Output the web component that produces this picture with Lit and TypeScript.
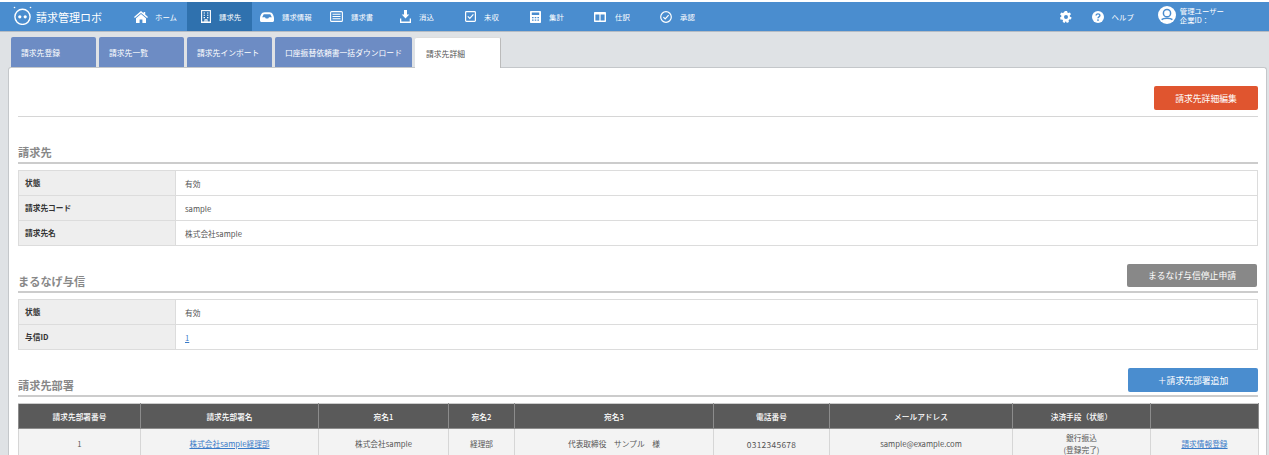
import { LitElement, html, css, svg } from "lit";
import { customElement } from "lit/decorators.js";

const icons: Record<string, unknown> = {
  home: svg`<svg width="14" height="12" viewBox="0 0 14 12" fill="#fff"><path d="M7 0 L9.6 2.2 V1 H11.2 V3.6 L14 6 L13.1 7 L7 1.9 L.9 7 L0 6Z"/><path d="M7 3 L12 7.2 V12 H8.4 V8.4 H5.6 V12 H2 V7.2Z"/></svg>`,
  building: svg`<svg width="10" height="13" viewBox="0 0 10 13" fill="none" stroke="#fff"><rect x=".6" y=".6" width="8.8" height="11.4" stroke-width="1.1"/><path d="M0 12.5H10" stroke-width="1"/><path d="M2.6 3h1.4M6 3h1.4M2.6 5.3h1.4M6 5.3h1.4M2.6 7.6h1.4M6 7.6h1.4M4 12V9.8h2V12" stroke-width="1.1"/></svg>`,
  tray: svg`<svg width="14" height="10" viewBox="0 0 14 10" fill="#fff"><path d="M3 .5C4.5 0 9.5 0 11 .5 12.5 1.2 14 4 14 6V8.5C14 9.3 13.3 10 12.5 10H1.5C.7 10 0 9.3 0 8.5V6C0 4 1.5 1.2 3 .5ZM3.7 2.2 2.2 5.2H5L5.8 6.4H8.2L9 5.2H11.8L10.3 2.2Z" fill-rule="evenodd"/></svg>`,
  list: svg`<svg width="13" height="11" viewBox="0 0 13 11" fill="none" stroke="#fff" stroke-width="1.1"><rect x=".6" y=".6" width="11.8" height="9.8" rx="1"/><path d="M2.5 3.2H10.5M2.5 5.5H10.5M2.5 7.8H10.5"/></svg>`,
  download: svg`<svg width="11" height="13" viewBox="0 0 11 13" fill="#fff"><path d="M4 0H7V4.4H9.3L5.5 8.4 1.7 4.4H4Z"/><path d="M0 8.4H1.3V11.4H9.7V8.4H11V13H0Z"/></svg>`,
  check: svg`<svg width="11" height="11" viewBox="0 0 11 11" fill="none" stroke="#fff"><rect x=".6" y=".6" width="9.8" height="9.8" rx=".8" stroke-width="1.2"/><path d="M2.8 5.4 4.8 7.4 8.4 3.4" stroke-width="1.2"/></svg>`,
  calc: svg`<svg width="11" height="12" viewBox="0 0 11 12" fill="#fff"><path fill-rule="evenodd" d="M1 0H10C10.6 0 11 .4 11 1V11C11 11.6 10.6 12 10 12H1C.4 12 0 11.6 0 11V1C0 .4 .4 0 1 0ZM1.8 1.6V4H9.2V1.6ZM2 6V7.2H3.6V6ZM4.7 6V7.2H6.3V6ZM7.4 6V7.2H9V6ZM2 8.6V9.8H3.6V8.6ZM4.7 8.6V9.8H6.3V8.6ZM7.4 8.6V9.8H9V8.6Z"/></svg>`,
  columns: svg`<svg width="12" height="10" viewBox="0 0 12 10" fill="#fff"><path fill-rule="evenodd" d="M1 0H11C11.6 0 12 .4 12 1V9C12 9.6 11.6 10 11 10H1C.4 10 0 9.6 0 9V1C0 .4 .4 0 1 0ZM1.4 2.6V8.6H5.4V2.6ZM6.6 2.6V8.6H10.6V2.6Z"/></svg>`,
  circleCheck: svg`<svg width="12" height="12" viewBox="0 0 12 12" fill="none" stroke="#fff" stroke-width="1.2"><circle cx="6" cy="6" r="5.3"/><path d="M3.4 6.2 5.2 8 8.6 4.2"/></svg>`,
};

const navItems = [
  { icon: "home", label: "ホーム", w: 67, pad: 14, gap: 7 },
  { icon: "building", label: "請求先", w: 65, pad: 14, gap: 8, active: true },
  { icon: "tray", label: "請求情報", w: 69, pad: 8, gap: 8 },
  { icon: "list", label: "請求書", w: 65, pad: 9, gap: 8 },
  { icon: "download", label: "消込", w: 65, pad: 14, gap: 8 },
  { icon: "check", label: "未収", w: 65, pad: 14, gap: 8 },
  { icon: "calc", label: "集計", w: 65, pad: 14, gap: 8 },
  { icon: "columns", label: "仕訳", w: 65, pad: 13, gap: 9 },
  { icon: "circleCheck", label: "承認", w: 65, pad: 14, gap: 8 },
];

const tabs = [
  { label: "請求先登録", w: 85 },
  { label: "請求先一覧", w: 85 },
  { label: "請求先インポート", w: 85 },
  { label: "口座振替依頼書一括ダウンロード", w: 137 },
  { label: "請求先詳細", w: 86, active: true },
];

const deptCols = [
  { h: "請求先部署番号", w: 122, v: "1" },
  { h: "請求先部署名", w: 178, v: "株式会社sample経理部", link: true },
  { h: "宛名1", w: 130, v: "株式会社sample" },
  { h: "宛名2", w: 66, v: "経理部" },
  { h: "宛名3", w: 199, v: "代表取締役　サンプル　様" },
  { h: "電話番号", w: 116, v: "0312345678", num: true },
  { h: "メールアドレス", w: 183, v: "sample@example.com" },
  { h: "決済手段（状態）", w: 138, v: "銀行振込\n(登録完了)" },
  { h: "", w: 108, v: "請求情報登録", link: true },
];

@customElement("app-root")
export class AppRoot extends LitElement {
  static styles = css`
    :host {
      display: block;
      height: 455px;
      overflow: hidden;
      background: #dfe2e5;
      font-family: "Noto Sans CJK JP", "Liberation Sans", sans-serif;
      color: #555;
    }
    .topgap { height: 2px; background: #fff; }
    header {
      height: 29px;
      background: #4a8dcf;
      border-bottom: 1px solid #b5bcc4;
      display: flex;
      align-items: stretch;
      color: #fff;
    }
    .logo {
      width: 120px;
      flex: none;
      display: flex;
      align-items: center;
      padding-left: 12px;
      gap: 3px;
      box-sizing: border-box;
      font-size: 11px;
      white-space: nowrap;
    }
    .logo svg { margin-top: -3px; }
    .nav-item {
      display: flex;
      align-items: center;
      box-sizing: border-box;
      flex: none;
      font-size: 7.4px;
      white-space: nowrap;
    }
    .nav-item.active { background: #2f71ae; }
    .nav-item svg { display: block; flex: none; }
    .right {
      margin-left: auto;
      display: flex;
      align-items: center;
      font-size: 7.4px;
      padding-right: 45px;
    }
    .gear { margin-right: 20px; }
    .help { display: flex; align-items: center; gap: 8px; margin-right: 24px; }
    .user { display: flex; align-items: center; gap: 4px; line-height: 9px; margin-top: -3px; }
    .tabs {
      display: flex;
      gap: 3px;
      padding: 5px 0 0 11px;
      height: 30px;
    }
    .tab {
      box-sizing: border-box;
      height: 30px;
      background: #6d8cc4;
      color: #fff;
      font-size: 7.8px;
      padding-left: 10px;
      display: flex;
      align-items: center;
      border-radius: 2px 2px 0 0;
      white-space: nowrap;
    }
    .tab.active {
      background: #fff;
      color: #555;
      height: 31px;
      padding-left: 11px;
      position: relative;
      z-index: 1;
      border-right: 1px solid #bbb;
      border-top: 1px solid #ddd;
    }
    .card {
      margin: 0 2px 0 8px;
      background: #fff;
      border: 1px solid #c4c7ca;
      border-bottom: 0;
      border-radius: 3px 3px 0 0;
      padding: 18px 8px 0 9px;
      height: 400px;
      box-sizing: border-box;
    }
    .toolbar {
      display: flex;
      justify-content: flex-end;
      padding-bottom: 6px;
      border-bottom: 1px solid #d6d6d6;
    }
    .btn {
      box-sizing: border-box;
      height: 24px;
      display: flex;
      align-items: center;
      justify-content: center;
      color: #fff;
      font-size: 8.8px;
      border-radius: 2px;
      white-space: nowrap;
    }
    .btn.red { width: 104px; background: #e0552f; }
    .btn.gray { width: 130px; height: 23px; background: #888; margin-right: 1px; margin-bottom: 4px; }
    .btn.blue { width: 130px; background: #4a8dcf; margin-bottom: 3px; }
    .sec-head {
      height: 47px;
      box-sizing: border-box;
      border-bottom: 2px solid #ccc;
      display: flex;
      justify-content: space-between;
      align-items: flex-end;
      margin-bottom: 6px;
    }
    .sec-title {
      font-size: 11.2px;
      color: #888;
      font-weight: 700;
      line-height: 16px;
      padding-bottom: 2px;
    }
    table {
      border-collapse: collapse;
      table-layout: fixed;
      width: 1240px;
      font-size: 7.7px;
    }
    .info th, .info td {
      border: 1px solid #dcdcdc;
      height: 25px;
      padding: 0;
      box-sizing: border-box;
    }
    .info th {
      width: 157px;
      background: #eee;
      color: #333;
      text-align: left;
      padding-left: 6px;
      padding-bottom: 2px;
      font-weight: 700;
    }
    .info td { padding-left: 9px; color: #555; }
    a { color: #3a7bc8; text-decoration: underline; }
    .dept th {
      background: #5a5a5a;
      color: #fff;
      height: 24px;
      padding: 0;
      font-weight: 500;
      border: 1px solid #8c8c8c;
      border-top-color: #ccc;
      text-align: center;
    }
    .dept td {
      background: #f3f3f3;
      border: 1px solid #d6d6d6;
      height: 30px;
      padding: 0;
      text-align: center;
      line-height: 12px;
      white-space: pre-line;
      color: #555;
    }
    .dept td.num { font-size: 8.4px; letter-spacing: .3px; }
  `;

  private infoTable(rows: [string, unknown][]) {
    return html`<table class="info">
      ${rows.map(([k, v]) => html`<tr><th>${k}</th><td>${v}</td></tr>`)}
    </table>`;
  }

  render() {
    return html`
      <div class="topgap"></div>
      <header>
        <div class="logo">
          <svg width="21" height="19" viewBox="0 0 21 19" fill="none">
            <circle cx="10.5" cy="10.8" r="7.6" stroke="#fff" stroke-width="1.4"/>
            <circle cx="7.8" cy="10.8" r="1.6" fill="#fff"/>
            <circle cx="13.2" cy="10.8" r="1.6" fill="#fff"/>
            <circle cx="2.5" cy="1.5" r=".8" fill="#fff"/>
            <circle cx="18.5" cy="1.5" r=".8" fill="#fff"/>
          </svg>
          <span>請求管理ロボ</span>
        </div>
        ${navItems.map(
          (n) => html`<div
            class="nav-item ${n.active ? "active" : ""}"
            style="width:${n.w}px;padding-left:${n.pad}px;gap:${n.gap}px"
          >
            ${icons[n.icon]}<span>${n.label}</span>
          </div>`
        )}
        <div class="right">
          <svg class="gear" width="12" height="12" viewBox="0 0 12 12" fill="#fff">
            <path fill-rule="evenodd" d="M4.9 0H7.1L7.4 1.6 8.4 2.1 9.9 1.4 11 3.3 9.8 4.3V5.5L11.6 6.4 10.9 8.6 9.6 8.2 8.6 9.3 8.9 11 6.9 12 6 10.6H5.4L4.6 12 2.7 11 3 9.3 2 8.4 .6 8.8 0 6.6 1.3 5.7V4.5L.1 3.4 1.2 1.4 2.8 2 3.8 1.5ZM6 4A2 2 0 1 0 6 8 2 2 0 1 0 6 4Z"/>
          </svg>
          <div class="help">
            <svg width="12" height="12" viewBox="0 0 12 12">
              <circle cx="6" cy="6" r="6" fill="#fff"/>
              <path d="M4.1 4.6C4.1 2.3 7.9 2.3 7.9 4.5 7.9 5.9 6 5.8 6 7.2" fill="none" stroke="#4a8dcf" stroke-width="1.4"/>
              <circle cx="6" cy="9.1" r=".9" fill="#4a8dcf"/>
            </svg>
            <span>ヘルプ</span>
          </div>
          <div class="user">
            <svg width="18" height="18" viewBox="0 0 18 18">
              <circle cx="9" cy="9" r="9" fill="#fff"/>
              <circle cx="9" cy="7.2" r="3.6" fill="none" stroke="#4a8dcf" stroke-width="1.5"/>
              <path d="M3.6 13.6C5.5 11.8 12.5 11.8 14.4 13.6" fill="none" stroke="#4a8dcf" stroke-width="1.5"/>
            </svg>
            <div>管理ユーザー<br />企業ID：</div>
          </div>
        </div>
      </header>
      <div class="tabs">
        ${tabs.map(
          (t) => html`<div class="tab ${t.active ? "active" : ""}" style="width:${t.w}px">${t.label}</div>`
        )}
      </div>
      <div class="card">
        <div class="toolbar"><div class="btn red">請求先詳細編集</div></div>
        <div class="sec-head"><div class="sec-title">請求先</div></div>
        ${this.infoTable([
          ["状態", "有効"],
          ["請求先コード", "sample"],
          ["請求先名", "株式会社sample"],
        ])}
        <div class="sec-head">
          <div class="sec-title">まるなげ与信</div>
          <div class="btn gray">まるなげ与信停止申請</div>
        </div>
        ${this.infoTable([
          ["状態", "有効"],
          ["与信ID", html`<a>1</a>`],
        ])}
        <div class="sec-head">
          <div class="sec-title">請求先部署</div>
          <div class="btn blue">＋請求先部署追加</div>
        </div>
        <table class="dept">
          <colgroup>${deptCols.map((c) => html`<col style="width:${c.w}px" />`)}</colgroup>
          <tr>${deptCols.map((c) => html`<th>${c.h}</th>`)}</tr>
          <tr>${deptCols.map((c) => html`<td class=${c.num ? "num" : ""}>${c.link ? html`<a>${c.v}</a>` : c.v}</td>`)}</tr>
        </table>
      </div>
    `;
  }
}
